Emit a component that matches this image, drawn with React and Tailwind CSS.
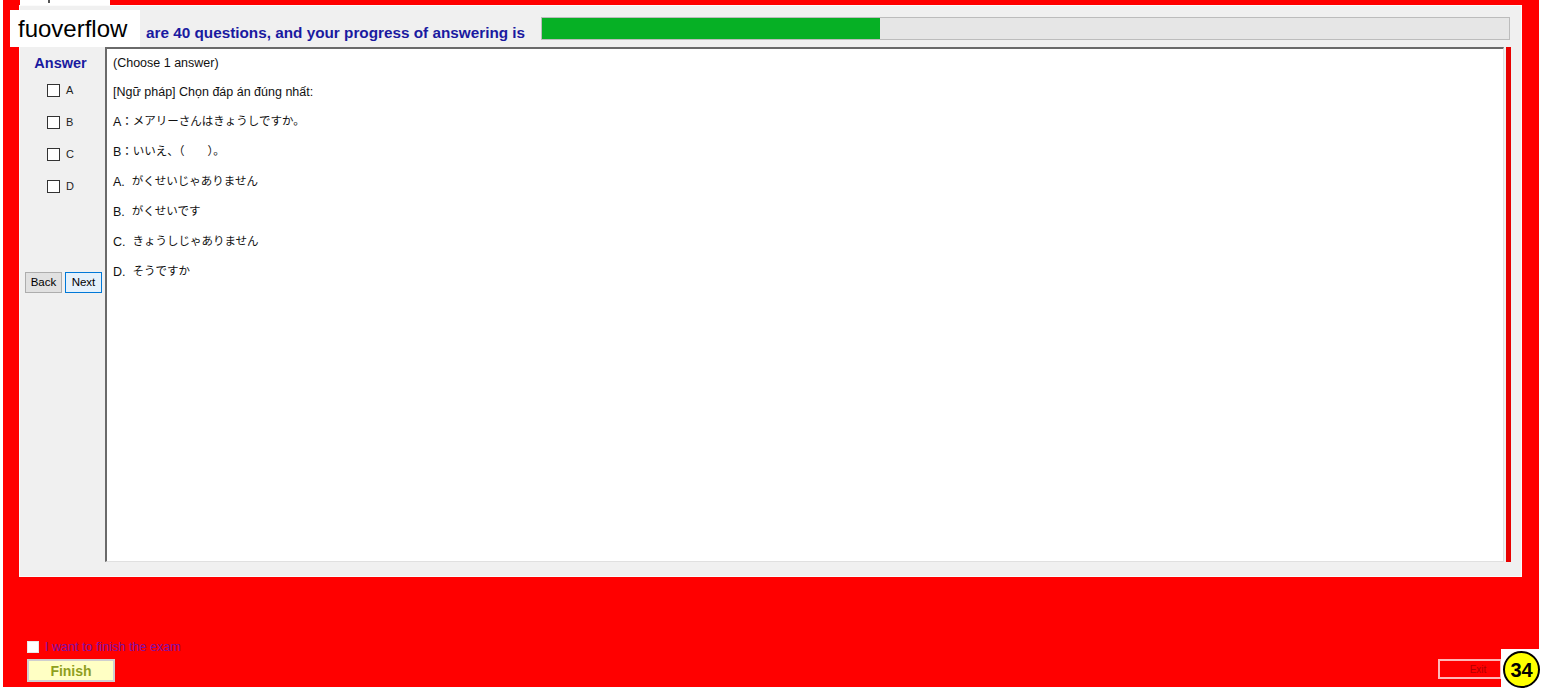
import React from "react";

const FONT = { fontFamily: '"Liberation Sans", Arial, "Noto Sans CJK JP", sans-serif' };

const lines = [
  { t: "(Choose 1 answer)" },
  { t: "[Ngữ pháp] Chọn đáp án đúng nhất:" },
  { p: "A", t: "：メアリーさんはきょうしですか。" },
  { p: "B", t: "：いいえ、（　　）。" },
  { p: "A.  ", t: "がくせいじゃありません" },
  { p: "B.  ", t: "がくせいです" },
  { p: "C.  ", t: "きょうしじゃありません" },
  { p: "D.  ", t: "そうですか" },
];

function AnswerColumn() {
  return (
    <div className="w-[85px] flex flex-col">
      <div className="h-[27px] pt-[6px] flex items-center justify-center text-[14.5px] font-bold text-[#1a1aa0] pr-[4px]">
        Answer
      </div>
      <div className="flex flex-col">
        {["A", "B", "C", "D"].map((l) => (
          <div key={l} className="h-[32px] flex items-center pl-[27px] gap-[6px]">
            <span className="w-[13px] h-[13px] bg-white border border-[#333]" />
            <span className="text-[11px] text-[#222]">{l}</span>
          </div>
        ))}
      </div>
      <div className="mt-[70px] flex gap-[3px] pl-[5px]">
        <button className="w-[37px] h-[21px] bg-[#e1e1e1] border border-[#adadad] text-[11.5px] text-black">
          Back
        </button>
        <button className="w-[37px] h-[21px] bg-[#e5f1fb] border border-[#0078d7] text-[11.5px] text-black">
          Next
        </button>
      </div>
    </div>
  );
}

function QuestionBox() {
  return (
    <div className="w-[1399px] h-[515px] bg-white border-l-2 border-t-2 border-l-[#6a6a6a] border-t-[#6a6a6a] border-b border-r border-b-[#e0e0e0] border-r-[#e0e0e0] pl-[6px]">
      {lines.map((l, i) => (
        <div
          key={i}
          className={`flex items-center text-[12.5px] text-[#111] whitespace-pre ${i === 0 ? "h-[28px]" : "h-[30px]"}`}
        >
          {l.p && <span>{l.p}</span>}
          <span className={l.p ? "text-[11.5px]" : ""}>{l.t}</span>
        </div>
      ))}
    </div>
  );
}

export default function App() {
  return (
    <div className="w-[1542px] h-[690px] bg-white relative overflow-hidden" style={FONT}>
      <div className="ml-[3px] w-[1536px] h-[687px] bg-[#ff0000] flex flex-col">
        {/* tab header peeking over panel */}
        <div className="h-[5px] flex">
          <div className="ml-[17px] w-[90px] h-[5px] bg-white relative">
            <span className="absolute left-[28px] top-0 w-[2px] h-[3px] bg-[#555]" />
          </div>
        </div>

        {/* main gray panel */}
        <div className="ml-[16px] w-[1503px] h-[572px] bg-[#f0f0f0] border border-[#fbfbfb] flex flex-col">
          <div className="h-[41px] flex items-start">
            <div className="pl-[126px] pt-[19px] text-[15.3px] font-bold text-[#1a1aa0] whitespace-nowrap leading-none">
              are 40 questions, and your progress of answering is
            </div>
            <div className="ml-auto mr-[11px] mt-[11px] w-[969px] h-[23px] bg-[#e6e6e6] border border-[#bcbcbc] flex">
              <div className="w-[338px] h-full bg-[#06b025]" />
            </div>
          </div>
          <div className="flex">
            <AnswerColumn />
            <QuestionBox />
            <div className="ml-[2px] w-[5px] h-[515px] bg-[#e80000]" />
          </div>
        </div>

        {/* bottom area */}
        <div className="flex items-end justify-between mt-[64px]">
          <div className="flex flex-col ml-[24px]">
            <div className="flex items-center h-[12px]">
              <span className="w-[12px] h-[12px] bg-white border border-[#e8e8e8]" />
              <span className="ml-[6px] text-[12.6px] text-[#8010a8] leading-none">
                I want to finish the exam
              </span>
            </div>
            <button className="mt-[6px] w-[88px] h-[23px] bg-[#ffffc4] border-2 border-[#cfcfcf] text-[14px] font-bold text-[#8fa01e] leading-none">
              Finish
            </button>
          </div>
          <div className="mr-[37px] mb-[3px] w-[64px] h-[20px] border-2 border-[#ffb8b8] flex items-center justify-center pl-[16px] text-[10px] text-[#b00000]">
            Exit
          </div>
        </div>
      </div>

      {/* watermark overlay */}
      <div className="absolute left-[10px] top-[10px] w-[130px] h-[37px] bg-white flex items-center pl-[8px] text-[24px] text-black leading-none">
        fuoverflow
      </div>

      {/* page badge */}
      <div className="absolute right-0 bottom-0 w-[41px] h-[41px] bg-white flex items-center justify-center">
        <div className="w-[37px] h-[37px] rounded-full bg-[#ffff00] border-2 border-black flex items-center justify-center text-[20px] font-bold text-black leading-none">
          34
        </div>
      </div>
    </div>
  );
}
